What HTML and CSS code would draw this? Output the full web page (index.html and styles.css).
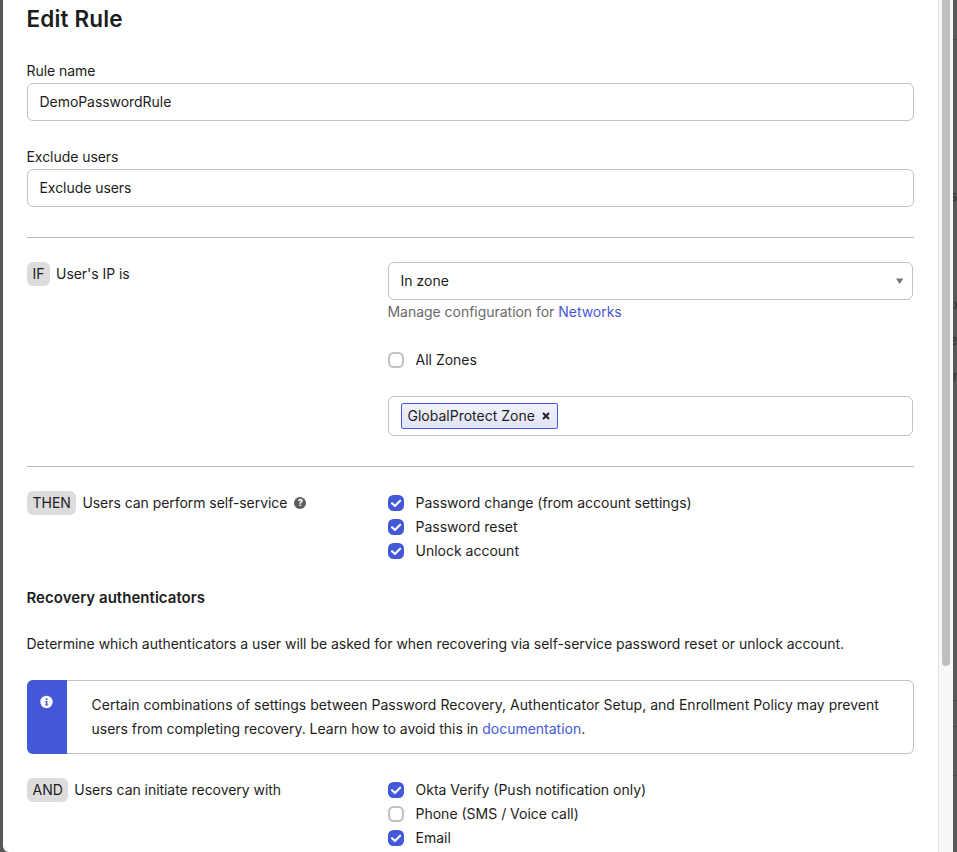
FILE: index.html
```html
<!DOCTYPE html>
<html lang="en">
<head>
<meta charset="utf-8">
<title>Edit Rule</title>
<link rel="stylesheet" href="styles.css">
</head>
<body>
<svg class="defs" aria-hidden="true">
  <symbol id="tick" viewBox="0 0 16 16"><path d="M4 8.2 7 11 12.1 5.7" fill="none" stroke="#fff" stroke-width="2.1" stroke-linecap="round" stroke-linejoin="round"/></symbol>
</svg>
<div class="backdrop">
  <span class="edge e0"></span>
  <span class="edge e1">s</span>
  <span class="edge e2">x</span>
  <span class="edge e3">e</span>
  <span class="edge e4">r</span>
  <span class="edge e5"></span>
  <span class="edge e6"></span>
  <span class="edge e7"></span>
</div>
<main class="modal">
  <form class="content">
    <h1>Edit Rule</h1>
    <div class="field">
      <label>Rule name</label>
      <div class="input">DemoPasswordRule</div>
    </div>
    <div class="field">
      <label>Exclude users</label>
      <div class="input">Exclude users</div>
    </div>
    <hr>
    <section class="row">
      <div class="lead"><span class="tag">IF</span><span>User's IP is</span></div>
      <div class="controls">
        <div class="input select"><span>In zone</span><svg width="8" height="6" viewBox="0 0 8 6"><path d="M0 .5h7.4L3.7 6z" fill="#767676"/></svg></div>
        <p class="hint">Manage configuration for <a>Networks</a></p>
        <label class="check zones"><span class="box"></span>All Zones</label>
        <div class="input tokens"><span class="token">GlobalProtect Zone<svg width="8" height="8" viewBox="0 0 8 8"><path d="M1 1l6 6M7 1 1 7" stroke="#1d1d21" stroke-width="1.9"/></svg></span></div>
      </div>
    </section>
    <hr>
    <section class="row">
      <div class="lead"><span class="tag">THEN</span><span>Users can perform self-service</span><span class="help">?</span></div>
      <div class="controls">
        <label class="check"><span class="box on"><svg><use href="#tick"/></svg></span>Password change (from account settings)</label>
        <label class="check"><span class="box on"><svg><use href="#tick"/></svg></span>Password reset</label>
        <label class="check"><span class="box on"><svg><use href="#tick"/></svg></span>Unlock account</label>
      </div>
    </section>
    <h2>Recovery authenticators</h2>
    <p class="intro">Determine which authenticators a user will be asked for when recovering via self-service password reset or unlock account.</p>
    <div class="notice">
      <div class="notice-icon"><svg width="13" height="13" viewBox="0 0 13 13"><circle cx="6.5" cy="6" r="6.2" fill="#fff"/><path d="M5.2 5h2.2v3.4h.8v1.2H5v-1.2h.8V6.1h-.6zM5.7 2.3h1.7v1.7H5.7z" fill="#4459d8"/></svg></div>
      <p>Certain combinations of settings between Password Recovery, Authenticator Setup, and Enrollment Policy may prevent<br><span class="tight">users from completing recovery. Learn how to avoid this in <a>documentation</a>.</span></p>
    </div>
    <section class="row">
      <div class="lead"><span class="tag">AND</span><span>Users can initiate recovery with</span></div>
      <div class="controls">
        <label class="check"><span class="box on"><svg><use href="#tick"/></svg></span>Okta Verify (Push notification only)</label>
        <label class="check"><span class="box"></span>Phone (SMS / Voice call)</label>
        <label class="check"><span class="box on"><svg><use href="#tick"/></svg></span>Email</label>
      </div>
    </section>
  </form>
  <div class="scrollbar"><div class="thumb"></div></div>
</main>
</body>
</html>
```
FILE: styles.css
```css
* { box-sizing: border-box; margin: 0; padding: 0; }
body {
  height: 852px;
  overflow: hidden;
  background: #585858;
  color: #1d1d21;
  font: 14px/24px Inter, "Liberation Sans", sans-serif;
  padding: 0 4px 0 3px;
}
.defs { display: none; }
.backdrop { position: absolute; top: 0; right: 0; width: 4px; height: 852px; overflow: hidden; }
.edge { position: absolute; right: 0; min-width: 4px; color: #303030; font-size: 13px; line-height: 14px; }
.e0, .e5, .e6, .e7 { height: 1px; background: #484848; }
.e0 { top: 39px; }
.e1 { top: 189px; }
.e2 { top: 297px; right: -3px; }
.e3 { top: 333px; }
.e4 { top: 369px; right: -1px; }
.e5 { top: 700px; }
.e6 { top: 726px; }
.e7 { top: 775px; }
.modal {
  display: flex;
  justify-content: space-between;
  height: 852px;
  background: #fff;
  border-bottom-left-radius: 6px;
}
.content { width: 911px; padding: 6px 0 0 24px; }
h1 { font-size: 22.5px; line-height: 26px; font-weight: 600; letter-spacing: 0.15px; margin: 0 0 27px -0.5px; }
.field { margin-bottom: 24px; letter-spacing: -0.05px; }
.field label { display: block; margin-left: -0.5px; }
.input {
  display: flex;
  align-items: center;
  height: 38px;
  padding: 0 11.5px;
  border: 1px solid #c1c1c1;
  border-radius: 6px;
}
hr { border: 0; border-top: 1px solid #b9b9b9; margin: 30px 0 24px; }
.row { display: grid; grid-template-columns: 361px 525px; }
.lead { display: flex; align-items: center; height: 24px; letter-spacing: -0.05px; }
.tag { background: #dcdcdc; border-radius: 6px; padding: 0 5.5px; margin-right: 6px; letter-spacing: 0; }
.select { justify-content: space-between; padding-right: 8px; }
.hint { color: #6a6a6a; letter-spacing: -0.03px; margin-left: -0.5px; }
a { color: #4459d8; }
.check { display: flex; align-items: center; height: 24px; }
.zones { margin: 24px 0; }
.box { width: 16px; height: 16px; margin-right: 11.5px; border: 2px solid #c1c1c1; border-radius: 5.5px; }
.box.on { border: 0; background: #4459d8; }
.box svg { display: block; width: 16px; height: 16px; }
.tokens { height: 40px; padding: 0 12px; }
.token {
  display: flex;
  align-items: center;
  justify-content: space-between;
  width: 157px;
  height: 26px;
  padding: 0 7px 0 5.5px;
  border: 1px solid #4459d8;
  border-radius: 2px;
  background: linear-gradient(#f1f2fd, #e1e3f7);
}
.help {
  width: 12px;
  height: 12px;
  margin-left: 7px;
  border-radius: 50%;
  background: #5e5e5e;
  color: #fff;
  font-size: 9px;
  line-height: 12px;
  font-weight: 800;
  letter-spacing: 0;
  text-align: center;
}
h2 { font-size: 15px; line-height: 24px; font-weight: 600; letter-spacing: 0.03px; margin: 23px 0 22px -0.5px; }
.intro { letter-spacing: -0.025px; white-space: nowrap; margin-left: -0.5px; }
.notice {
  display: flex;
  height: 74px;
  margin: 24px 0;
  border: 1px solid #c1c1c1;
  border-radius: 6px;
}
.notice-icon { width: 40px; margin: -1px 0 -1px -1px; padding: 16px 0 0 13px; background: #4459d8; border-radius: 6px 0 0 6px; }
.notice-icon svg { display: block; overflow: visible; }
.notice p { padding: 12px 0 0 24.5px; white-space: nowrap; letter-spacing: 0.015px; }
.notice .tight { letter-spacing: -0.015px; }
.scrollbar { width: 15px; padding-left: 3px; background: #f8f8f8; border-left: 1px solid #e4e4e4; }
.thumb { width: 8px; height: 666px; background: #bfbfbf; border-radius: 0 0 4px 4px; }
```
